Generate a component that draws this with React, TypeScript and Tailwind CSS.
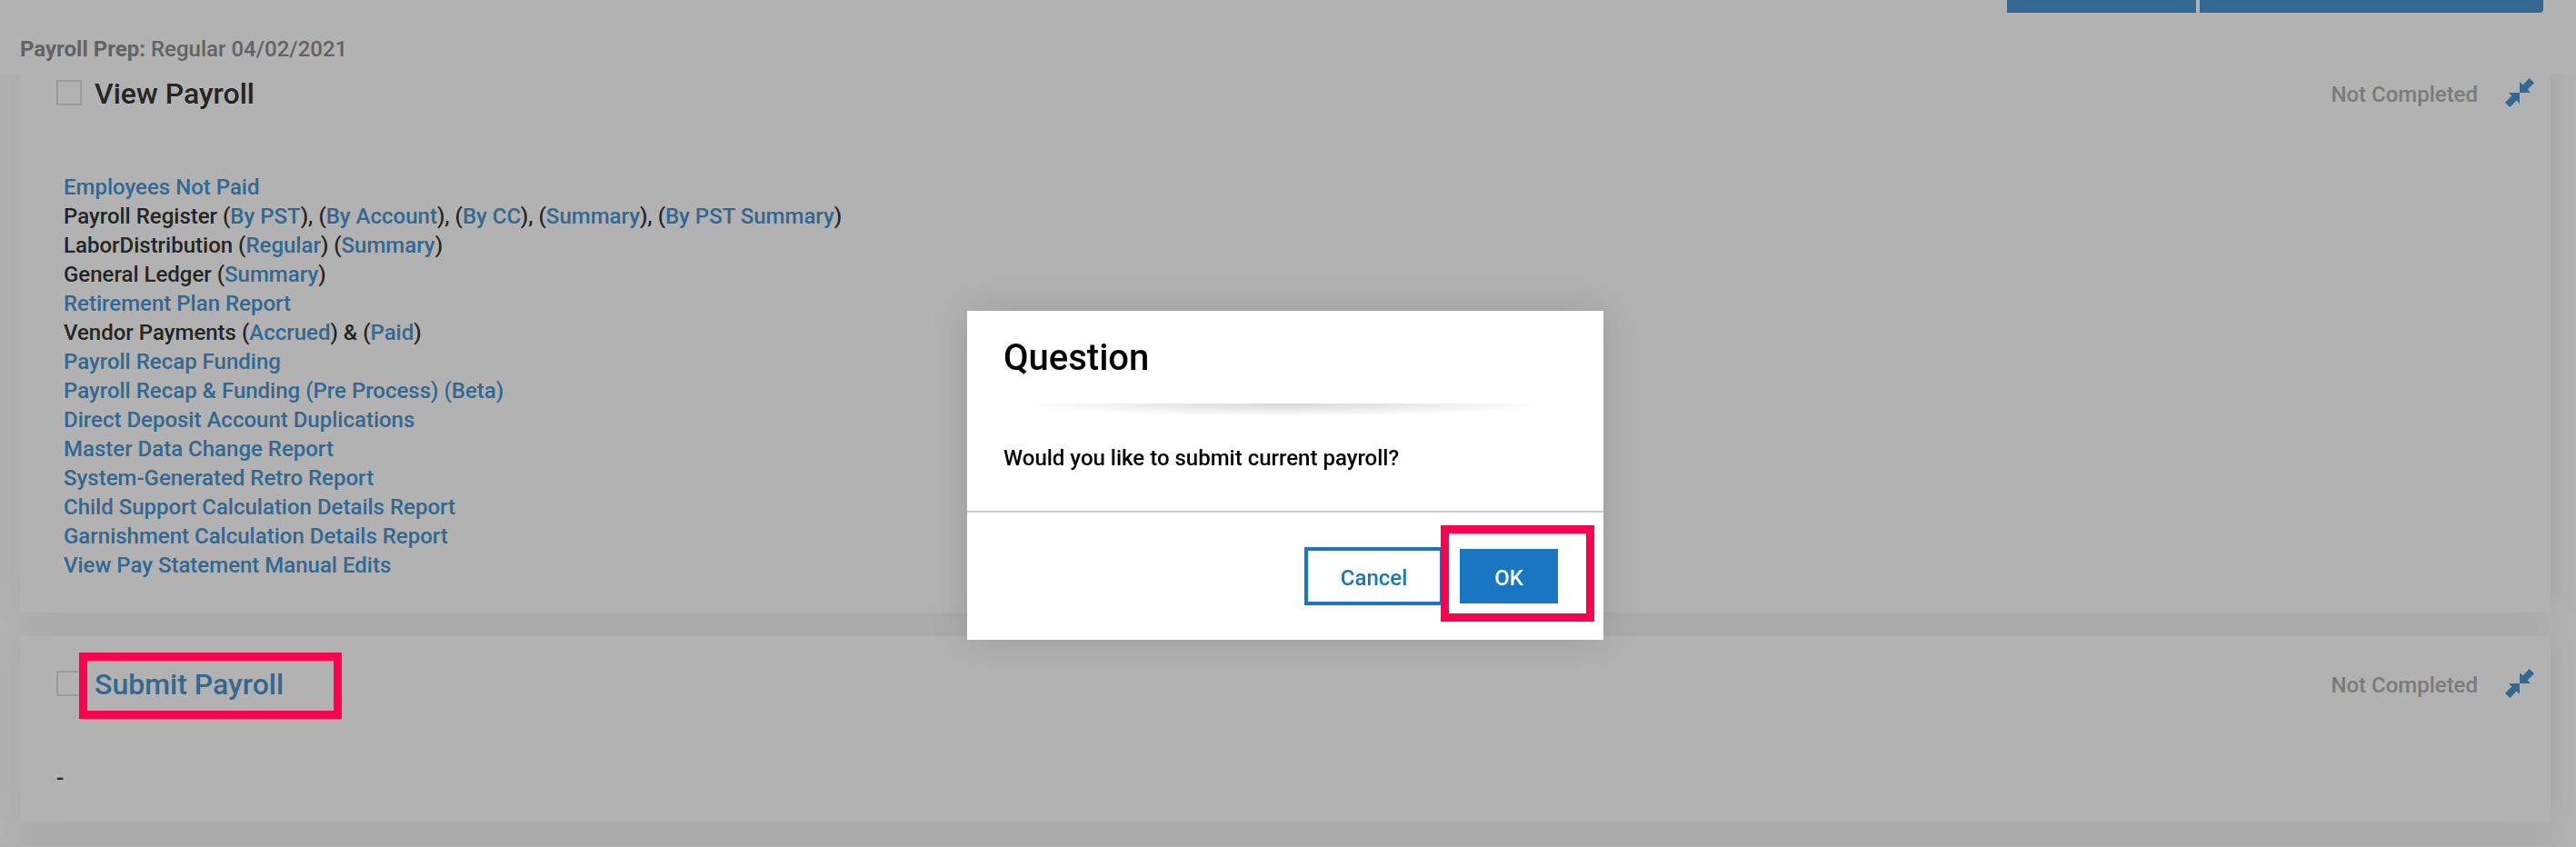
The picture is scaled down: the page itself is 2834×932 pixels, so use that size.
import React from 'react';

type Part = { text: string; link?: boolean };

const reports: Part[][] = [
	[{ text: 'Employees Not Paid', link: true }],
	[
		{ text: 'Payroll Register (' },
		{ text: 'By PST', link: true },
		{ text: '), (' },
		{ text: 'By Account', link: true },
		{ text: '), (' },
		{ text: 'By CC', link: true },
		{ text: '), (' },
		{ text: 'Summary', link: true },
		{ text: '), (' },
		{ text: 'By PST Summary', link: true },
		{ text: ')' },
	],
	[
		{ text: 'LaborDistribution (' },
		{ text: 'Regular', link: true },
		{ text: ') (' },
		{ text: 'Summary', link: true },
		{ text: ')' },
	],
	[{ text: 'General Ledger (' }, { text: 'Summary', link: true }, { text: ')' }],
	[{ text: 'Retirement Plan Report', link: true }],
	[
		{ text: 'Vendor Payments (' },
		{ text: 'Accrued', link: true },
		{ text: ') & (' },
		{ text: 'Paid', link: true },
		{ text: ')' },
	],
	[{ text: 'Payroll Recap Funding', link: true }],
	[{ text: 'Payroll Recap & Funding (Pre Process) (Beta)', link: true }],
	[{ text: 'Direct Deposit Account Duplications', link: true }],
	[{ text: 'Master Data Change Report', link: true }],
	[{ text: 'System-Generated Retro Report', link: true }],
	[{ text: 'Child Support Calculation Details Report', link: true }],
	[{ text: 'Garnishment Calculation Details Report', link: true }],
	[{ text: 'View Pay Statement Manual Edits', link: true }],
];

const CollapseIcon = () => (
	<svg viewBox="0 0 32 32" className="size-8 fill-[#4896d1]" aria-hidden="true">
		<path d="M16 16V4l3.4 3.4L26.7 0 32 5.3l-7.3 7.3L28 16z" />
		<path d="M16 16v12l-3.4-3.4L5.3 32 0 26.7l7.3-7.3L4 16z" />
	</svg>
);

const Card = ({
	id,
	title,
	className = '',
	children,
}: {
	id: string;
	title: React.ReactNode;
	className?: string;
	children?: React.ReactNode;
}) => (
	<section className={`relative bg-white pt-7 pr-[18px] pb-8 pl-10 shadow-[0_0_36px_rgba(0,0,0,0.08)] ${className}`}>
		<div className="flex h-12 items-center justify-between">
			<div className="flex items-center gap-3.5">
				<input
					id={id}
					type="checkbox"
					className="size-7 appearance-none border-2 border-[#dfdfdf]"
				/>
				<label htmlFor={id} className="pt-0.5 text-[32px] leading-[48px]">
					{title}
				</label>
			</div>
			<div className="flex items-center gap-[30px]">
				<span className="pt-1 text-[#b0b0b0]">Not Completed</span>
				<button type="button" title="Collapse">
					<CollapseIcon />
				</button>
			</div>
		</div>
		<div className="mt-16">{children}</div>
	</section>
);

const QuestionDialog = () => (
	<div className="fixed inset-0 z-20 flex items-start justify-center pt-[342px] pr-1.5">
		<div
			role="dialog"
			aria-labelledby="question-title"
			className="w-[700px] bg-white text-black shadow-[0_0_40px_rgba(0,0,0,0.13)]"
		>
			<div className="px-10 pt-7">
				<h2 id="question-title" className="text-[40px] leading-[48px]">
					Question
				</h2>
				<div className="mx-4 mt-[26px] h-3.5 bg-[radial-gradient(ellipse_50%_100%_at_50%_0%,rgba(0,0,0,0.16),transparent)]" />
				<p className="mt-[30px]">Would you like to submit current payroll?</p>
			</div>
			<div className="mt-[42px] flex items-center justify-end gap-[18px] border-t-2 border-[#cbcbcb] pt-[38px] pr-[50px] pb-[38px]">
				<button type="button" className="h-16 border-4 border-[#1976c2] px-9 pt-1 text-[#1976c2]">
					Cancel
				</button>
				<div className="relative">
					<button type="button" className="h-[60px] bg-[#1976c2] px-[38px] pt-1 text-white">
						OK
					</button>
					<div className="pointer-events-none absolute -top-[26px] -right-10 -bottom-5 -left-[21px] border-[9px] border-[#ff004f]" />
				</div>
			</div>
		</div>
	</div>
);

const App = () => {
	return (
		<div className="h-screen overflow-hidden bg-white font-['Roboto',sans-serif] text-2xl leading-8 font-medium text-[#363636]">
			<header className="flex h-[82px] flex-col">
				<div className="flex justify-end gap-1 pr-9">
					<div className="h-3.5 w-52 bg-[#4896d1]" />
					<div className="h-3.5 w-[378px] rounded-br bg-[#4896d1]" />
				</div>
				<p className="mt-6 pl-[22px] text-[#8c8f91]">
					<span className="font-bold">Payroll Prep:</span> Regular 04/02/2021
				</p>
			</header>

			<main className="flex flex-col gap-[26px] overflow-hidden pr-7 pl-[22px]">
				<Card id="view-payroll" title="View Payroll" className="-mt-8">
					<ul className="pb-1 pl-2">
						{reports.map((parts, i) => (
							<li key={i}>
								{parts.map((part, j) =>
									part.link ? (
										<a key={j} href="#" className="text-[#4896d1]">
											{part.text}
										</a>
									) : (
										<span key={j}>{part.text}</span>
									)
								)}
							</li>
						))}
					</ul>
				</Card>
				<Card
					id="submit-payroll"
					title={
						<a href="#" className="text-[#4896d1]">
							Submit Payroll
						</a>
					}
				>
					<p>-</p>
					<div className="pointer-events-none absolute top-[18px] left-[65px] z-20 h-[73px] w-[289px] border-[9px] border-[#ff004f]" />
				</Card>
				<section className="h-12 bg-white shadow-[0_0_36px_rgba(0,0,0,0.08)]" />
			</main>

			<div className="fixed inset-0 z-10 bg-black/30" />
			<QuestionDialog />
		</div>
	);
};

export default App;
